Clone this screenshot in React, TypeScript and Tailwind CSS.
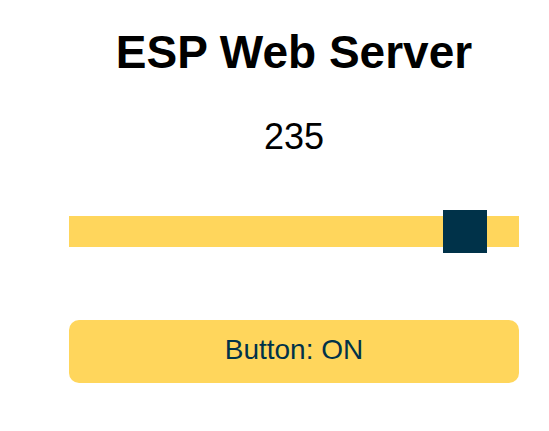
import React, { useState } from "react";

const App = () => {
	const [value, setValue] = useState(235);
	const [on, setOn] = useState(true);

	return (
		<div className="min-h-screen bg-white font-['Liberation_Sans',Arial,sans-serif]">
			<div className="ml-[69px] w-[450px] pt-[26px] flex flex-col text-center">
				<h2 className="text-[46px] leading-[52px] font-bold text-black">ESP Web Server</h2>
				<p className="mt-[39px] text-[36px] leading-[40px] text-black">{value}</p>

				{/* range slider with square thumb */}
				<input
					type="range"
					min={0}
					max={255}
					step={1}
					value={value}
					onChange={(e) => setValue(Number(e.target.value))}
					className="mt-[59px] block w-[450px] h-[31px] m-0 p-0 appearance-none bg-[#FFD65C] outline-none cursor-pointer [&::-webkit-slider-thumb]:appearance-none [&::-webkit-slider-thumb]:w-[44px] [&::-webkit-slider-thumb]:h-[43px] [&::-webkit-slider-thumb]:bg-[#003249] [&::-webkit-slider-thumb]:border-0 [&::-webkit-slider-thumb]:rounded-none"
				/>

				<button
					onClick={() => setOn(!on)}
					className="mt-[73px] h-[63px] w-[450px] pt-[15px] pb-[18px] rounded-[10px] bg-[#FFD65C] text-[28px] leading-[30px] text-[#003249] cursor-pointer"
				>
					Button: {on ? "ON" : "OFF"}
				</button>
			</div>
		</div>
	);
};

export default App;
